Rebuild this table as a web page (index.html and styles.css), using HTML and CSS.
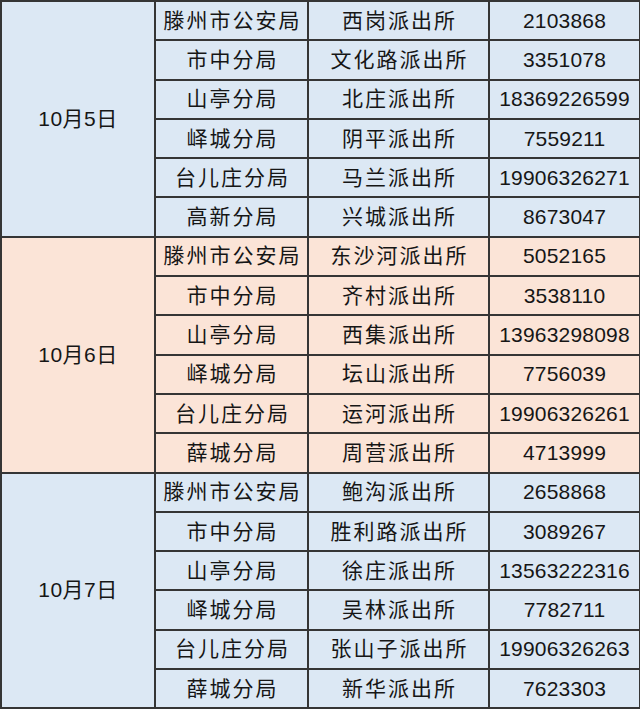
FILE: index.html
```html
<!DOCTYPE html>
<html lang="zh">
<head>
<meta charset="utf-8">
<link rel="stylesheet" href="styles.css">
</head>
<body>
<table class="duty">
  <colgroup>
    <col class="c-date"><col class="c-bureau"><col class="c-station"><col class="c-phone">
  </colgroup>
  <tbody class="g-blue">
    <tr><td class="date" rowspan="6">10月5日</td><td class="cjk">滕州市公安局</td><td class="cjk">西岗派出所</td><td class="num">2103868</td></tr>
    <tr><td class="cjk">市中分局</td><td class="cjk">文化路派出所</td><td class="num">3351078</td></tr>
    <tr><td class="cjk">山亭分局</td><td class="cjk">北庄派出所</td><td class="num">18369226599</td></tr>
    <tr><td class="cjk">峄城分局</td><td class="cjk">阴平派出所</td><td class="num">7559211</td></tr>
    <tr><td class="cjk">台儿庄分局</td><td class="cjk">马兰派出所</td><td class="num">19906326271</td></tr>
    <tr><td class="cjk">高新分局</td><td class="cjk">兴城派出所</td><td class="num">8673047</td></tr>
  </tbody>
  <tbody class="g-peach">
    <tr><td class="date" rowspan="6">10月6日</td><td class="cjk">滕州市公安局</td><td class="cjk">东沙河派出所</td><td class="num">5052165</td></tr>
    <tr><td class="cjk">市中分局</td><td class="cjk">齐村派出所</td><td class="num">3538110</td></tr>
    <tr><td class="cjk">山亭分局</td><td class="cjk">西集派出所</td><td class="num">13963298098</td></tr>
    <tr><td class="cjk">峄城分局</td><td class="cjk">坛山派出所</td><td class="num">7756039</td></tr>
    <tr><td class="cjk">台儿庄分局</td><td class="cjk">运河派出所</td><td class="num">19906326261</td></tr>
    <tr><td class="cjk">薛城分局</td><td class="cjk">周营派出所</td><td class="num">4713999</td></tr>
  </tbody>
  <tbody class="g-blue">
    <tr><td class="date" rowspan="6">10月7日</td><td class="cjk">滕州市公安局</td><td class="cjk">鲍沟派出所</td><td class="num">2658868</td></tr>
    <tr><td class="cjk">市中分局</td><td class="cjk">胜利路派出所</td><td class="num">3089267</td></tr>
    <tr><td class="cjk">山亭分局</td><td class="cjk">徐庄派出所</td><td class="num">13563222316</td></tr>
    <tr><td class="cjk">峄城分局</td><td class="cjk">吴林派出所</td><td class="num">7782711</td></tr>
    <tr><td class="cjk">台儿庄分局</td><td class="cjk">张山子派出所</td><td class="num">19906326263</td></tr>
    <tr><td class="cjk">薛城分局</td><td class="cjk">新华派出所</td><td class="num">7623303</td></tr>
  </tbody>
</table>
</body>
</html>
```
FILE: styles.css
```css
html, body {
  margin: 0;
  padding: 0;
  background: #ffffff;
}
.duty {
  border-collapse: collapse;
  table-layout: fixed;
  width: 639px;
  font-family: "Liberation Sans", "Noto Sans CJK SC", sans-serif;
  font-size: 21px;
  color: #161616;
}
.c-date { width: 154px; }
.c-bureau { width: 153px; }
.c-station { width: 181px; }
.c-phone { width: 151px; }
.duty td {
  border: 2px solid #353535;
  text-align: center;
  vertical-align: middle;
  padding: 0;
  height: 37.3px;
  line-height: 24px;
  white-space: nowrap;
  overflow: hidden;
}
.duty td.cjk {
  letter-spacing: 2px;
  padding-left: 2px;
}
.duty td.date {
  letter-spacing: 0.5px;
}
.duty td.num {
  letter-spacing: 0.2px;
}
.g-blue td { background: #dce8f4; }
.g-peach td { background: #fbe4d7; }
```
